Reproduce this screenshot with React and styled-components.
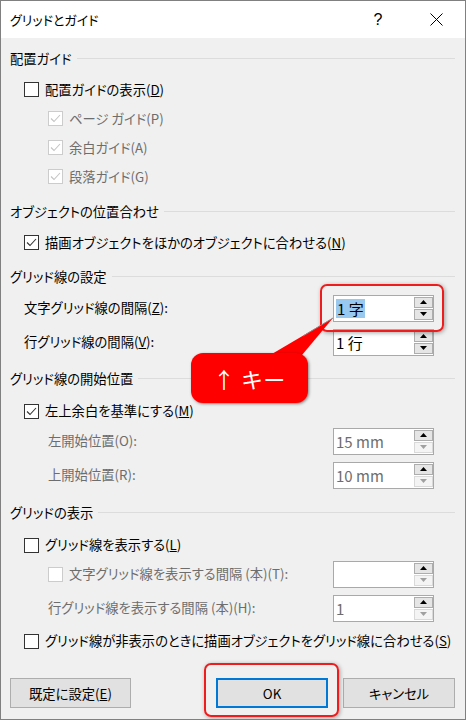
import React from "react";
import styled, { createGlobalStyle } from "styled-components";

const GlobalStyle = createGlobalStyle`
  html, body {
    margin: 0;
    padding: 0;
    background: #f0f0f0;
  }
  body {
    font-family: "Noto Sans CJK JP", "Noto Sans", sans-serif;
    font-feature-settings: "palt";
    color: #000;
  }
`;

const Window = styled.div`
  position: relative;
  width: 466px;
  height: 720px;
  box-sizing: border-box;
  border: 1px solid #808080;
  background: #f0f0f0;
  display: flex;
  flex-direction: column;
  overflow: hidden;
`;

const TitleBar = styled.div`
  height: 37px;
  flex: none;
  background: #fff;
  display: flex;
  align-items: center;
  padding: 0 10px 0 9px;
  font-size: 13px;
`;

const TitleText = styled.div`
  flex: 1;
`;

const CaptionButton = styled.div`
  width: 38px;
  height: 37px;
  display: flex;
  align-items: center;
  justify-content: center;
  font-family: "Liberation Sans", sans-serif;
  font-size: 16px;
  margin-left: ${(p) => p.gap || 0}px;
`;

const Body = styled.div`
  display: flex;
  flex-direction: column;
  padding: 0 10px 0 9px;
  flex: 1;
`;

const SectionHead = styled.div`
  display: flex;
  align-items: center;
  height: 22px;
  margin-top: ${(p) => p.mt || 0}px;
  font-size: 13.3px;
  white-space: nowrap;

  &::after {
    content: "";
    flex: 1;
    height: 1px;
    background: #dcdcdc;
    margin-left: 5px;
  }
`;

const Row = styled.div`
  display: flex;
  align-items: center;
  height: ${(p) => p.h || 29}px;
  margin-top: ${(p) => p.mt || 0}px;
  padding-left: ${(p) => (p.level === 2 ? 38 : 14)}px;
  font-size: 13.3px;
  white-space: nowrap;
  color: ${(p) => (p.disabled ? "#6d6d6d" : "#000")};
`;

const Box = styled.span`
  width: 15px;
  height: 15px;
  box-sizing: border-box;
  flex: none;
  border: 1px solid ${(p) => (p.disabled ? "#cccccc" : "#333333")};
  background: #fff;
  margin-right: 6px;
  display: flex;
  align-items: center;
  justify-content: center;
`;

const Label = styled.span`
  line-height: 18px;
`;

const Spinner = styled.div`
  width: 101px;
  height: 27px;
  box-sizing: border-box;
  border: 1px solid #a9a9a9;
  background: #fff;
  margin-left: auto;
  margin-right: 21px;
  display: flex;
  flex: none;
`;

const SpinValue = styled.div`
  flex: 1;
  display: flex;
  align-items: center;
  padding-left: 2px;
  font-size: 15px;
  font-feature-settings: normal;
  white-space: pre;
  color: ${(p) => (p.disabled ? "#6d6d6d" : "#000")};
`;

const Selected = styled.span`
  background: #99c9ef;
  padding: 0 1px;
  line-height: 19px;
`;

const SpinButtons = styled.div`
  width: 19px;
  display: flex;
  flex-direction: column;
  gap: 1px;
  padding: 1px 0;
`;

const SpinButton = styled.div`
  flex: 1;
  box-sizing: border-box;
  border: 1px solid ${(p) => (p.disabled ? "#d9d9d9" : "#adadad")};
  background: ${(p) => (p.disabled ? "#f4f4f4" : "#e5e5e5")};
  display: flex;
  align-items: center;
  justify-content: center;
`;

const Footer = styled.div`
  margin-top: auto;
  display: flex;
  align-items: center;
  padding: 0 10px 11px 9px;
`;

const Button = styled.div`
  height: 30px;
  width: ${(p) => p.w}px;
  box-sizing: border-box;
  border: ${(p) => (p.primary ? "2px solid #0078d7" : "1px solid #adadad")};
  background: #e1e1e1;
  display: flex;
  align-items: center;
  justify-content: center;
  font-size: 13.3px;
  margin-left: ${(p) => (p.auto ? "auto" : `${p.ml || 0}px`)};
`;

const Highlight = styled.div`
  position: absolute;
  left: ${(p) => p.x}px;
  top: ${(p) => p.y}px;
  width: ${(p) => p.w}px;
  height: ${(p) => p.h}px;
  box-sizing: border-box;
  border: 2px solid #ee1c1c;
  border-radius: 7px;
  box-shadow: 1px 1px 4px rgba(0, 0, 0, 0.35);
  pointer-events: none;
`;

const CalloutTail = styled.svg`
  position: absolute;
  left: 0;
  top: 0;
  width: 466px;
  height: 720px;
  pointer-events: none;
`;

const Callout = styled.div`
  position: absolute;
  left: 190px;
  top: 352px;
  width: 117px;
  height: 50px;
  border-radius: 12px;
  background: #ff0000;
  box-shadow: 1px 1px 3px rgba(0, 0, 0, 0.45);
  color: #fff;
  display: flex;
  align-items: center;
  justify-content: center;
  font-size: 22px;
  letter-spacing: 1px;
`;

function Check({ checked, disabled }) {
  return (
    <Box disabled={disabled}>
      {checked && (
        <svg width="13" height="13" viewBox="0 0 13 13">
          <polyline
            points="2,6.5 5,9.5 11,3"
            fill="none"
            stroke={disabled ? "#c4c4c4" : "#333"}
            strokeWidth="1.1"
          />
        </svg>
      )}
    </Box>
  );
}

function Arrow({ down, disabled }) {
  return (
    <svg width="7" height="4" viewBox="0 0 7 4">
      <polygon
        points={down ? "0,0 7,0 3.5,4" : "3.5,0 7,4 0,4"}
        fill={disabled ? "#a0a0a0" : "#000"}
      />
    </svg>
  );
}

function Spin({ value, selected, disabled }) {
  return (
    <Spinner>
      <SpinValue disabled={disabled}>
        {selected ? <Selected>{value}</Selected> : value}
      </SpinValue>
      <SpinButtons>
        <SpinButton>
          <Arrow />
        </SpinButton>
        <SpinButton disabled={disabled}>
          <Arrow down disabled={disabled} />
        </SpinButton>
      </SpinButtons>
    </Spinner>
  );
}

export default function App() {
  return (
    <>
      <GlobalStyle />
      <Window>
        <TitleBar>
          <TitleText>グリッドとガイド</TitleText>
          <CaptionButton>?</CaptionButton>
          <CaptionButton gap={20}>
            <svg width="13" height="13" viewBox="0 0 13 13">
              <path d="M0.5 0.5 L12.5 12.5 M12.5 0.5 L0.5 12.5" stroke="#000" strokeWidth="1" />
            </svg>
          </CaptionButton>
        </TitleBar>

        <Body>
          <SectionHead mt={9}>配置ガイド</SectionHead>
          <Row mt={6}>
            <Check />
            <Label>配置ガイドの表示(<u>D</u>)</Label>
          </Row>
          <Row level={2} disabled>
            <Check checked disabled />
            <Label>ページ ガイド(P)</Label>
          </Row>
          <Row level={2} disabled>
            <Check checked disabled />
            <Label>余白ガイド(A)</Label>
          </Row>
          <Row level={2} disabled>
            <Check checked disabled />
            <Label>段落ガイド(G)</Label>
          </Row>

          <SectionHead mt={9}>オブジェクトの位置合わせ</SectionHead>
          <Row mt={6}>
            <Check checked />
            <Label>描画オブジェクトをほかのオブジェクトに合わせる(<u>N</u>)</Label>
          </Row>

          <SectionHead mt={8}>グリッド線の設定</SectionHead>
          <Row h={34} mt={4}>
            <Label>文字グリッド線の間隔(<u>Z</u>):</Label>
            <Spin value="1 字" selected />
          </Row>
          <Row h={34}>
            <Label>行グリッド線の間隔(<u>V</u>):</Label>
            <Spin value="1 行" />
          </Row>

          <SectionHead mt={8}>グリッド線の開始位置</SectionHead>
          <Row h={26} mt={9}>
            <Check checked />
            <Label>左上余白を基準にする(<u>M</u>)</Label>
          </Row>
          <Row h={34} level={2} disabled>
            <Label>左開始位置(O):</Label>
            <Spin value="15 mm" disabled />
          </Row>
          <Row h={34} level={2} disabled>
            <Label>上開始位置(R):</Label>
            <Spin value="10 mm" disabled />
          </Row>

          <SectionHead mt={9}>グリッドの表示</SectionHead>
          <Row h={26} mt={9}>
            <Check />
            <Label>グリッド線を表示する(<u>L</u>)</Label>
          </Row>
          <Row h={34} level={2} mt={-1} disabled>
            <Check disabled />
            <Label>文字グリッド線を表示する間隔 (本)(T):</Label>
            <Spin value="" disabled />
          </Row>
          <Row h={34} level={2} disabled>
            <Label>行グリッド線を表示する間隔 (本)(H):</Label>
            <Spin value="1" disabled />
          </Row>
          <Row h={28} mt={2}>
            <Check />
            <Label>グリッド線が非表示のときに描画オブジェクトをグリッド線に合わせる(<u>S</u>)</Label>
          </Row>
        </Body>

        <Footer>
          <Button w={121}>既定に設定(<u>E</u>)</Button>
          <Button w={112} primary auto>OK</Button>
          <Button w={112} ml={15}>キャンセル</Button>
        </Footer>

        <Highlight x={319} y={283} w={124} h={48} />
        <Highlight x={203} y={662} w={135} h={54} />

        <CalloutTail viewBox="0 0 466 720">
          <polygon points="259,360 332,317 296,360" fill="#ff0000" />
          <line x1="302" y1="335" x2="332" y2="317" stroke="#8a8a8a" strokeWidth="1" />
        </CalloutTail>
        <Callout>↑ キー</Callout>
      </Window>
    </>
  );
}
